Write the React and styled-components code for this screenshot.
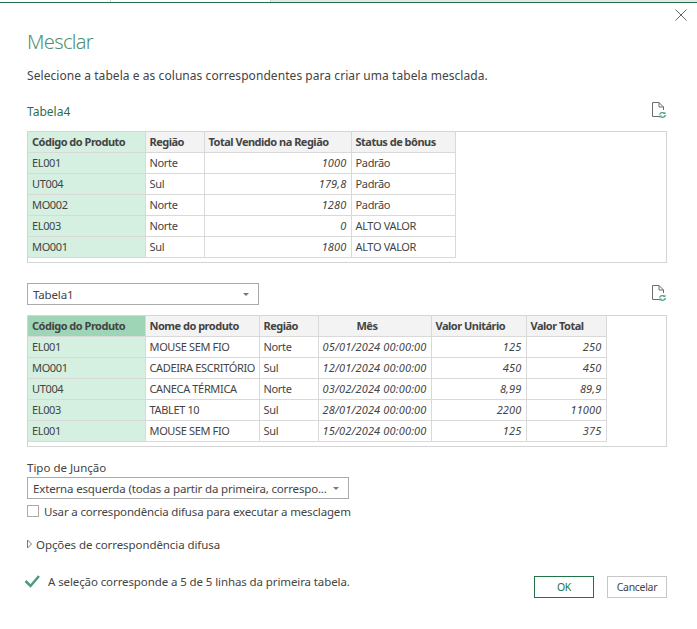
import React from "react";
import styled, { createGlobalStyle } from "styled-components";

const GlobalStyle = createGlobalStyle`
  html, body {
    margin: 0;
    padding: 0;
    background: #fff;
  }

  body {
    font-family: "Noto Sans", "Open Sans", sans-serif;
    font-size: 11.5px;
    color: #444;
  }
`;

const Page = styled.div`
  width: 697px;
  height: 629px;
  overflow: hidden;
  display: flex;
  flex-direction: column;
`;

const TopStrip = styled.div`
  height: 2px;
  border-bottom: 1px solid #217346;
  display: flex;
  flex: 0 0 auto;
`;

const StripCell = styled.div`
  width: ${props => props.width}px;
  border-right: 1px solid ${props => (props.divider ? "#d0d0d0" : "transparent")};
  background: ${props => props.shade || "transparent"};
`;

const Dialog = styled.div`
  flex: 1 1 auto;
  position: relative;
  padding: 26px 30px 0 27px;
`;

const CloseButton = styled.div`
  position: absolute;
  top: 5px;
  right: 9px;
  width: 14px;
  height: 14px;
  svg {
    display: block;
  }
`;

const Title = styled.h1`
  margin: 0;
  font-size: 20px;
  font-weight: 300;
  line-height: 26px;
  color: #4f8f6f;
  letter-spacing: -0.65px;
`;

const Intro = styled.p`
  margin: 12px 0 0;
  font-size: 12px;
  line-height: 17px;
  letter-spacing: 0.06px;
  color: #444;
`;

const SectionHead = styled.div`
  display: flex;
  justify-content: space-between;
  align-items: center;
  height: 22px;
  margin-top: ${props => props.gap}px;
`;

const TableName = styled.div`
  font-size: 12px;
  color: #2a6f55;
`;

const RefreshIcon = styled.div`
  width: 16px;
  height: 20px;
  svg {
    display: block;
  }
`;

const TableBox = styled.div`
  margin-top: ${props => props.gap}px;
  border: 1px solid #d4d4d4;
  height: 132px;
  box-sizing: border-box;
  width: 640px;
`;

const Grid = styled.table`
  border-collapse: collapse;
  table-layout: fixed;
  width: ${props => props.width}px;
`;

const HeadCell = styled.th`
  height: 20px;
  box-sizing: border-box;
  padding: 0 4px 0 ${props => props.indent || 4}px;
  font-size: 11px;
  font-weight: 700;
  line-height: 19px;
  letter-spacing: -0.5px;
  text-align: left;
  color: #444;
  white-space: nowrap;
  overflow: hidden;
  background: ${props => props.selected || "#f3f3f3"};
  border: 1px solid #d9d9d9;
  border-top: none;
  &:first-child {
    border-left: none;
  }
`;

const Cell = styled.td`
  height: 21px;
  box-sizing: border-box;
  padding: 0 4px;
  font-size: 11px;
  line-height: 20px;
  letter-spacing: ${props => (props.num ? "0.15px" : "-0.35px")};
  color: #444;
  white-space: nowrap;
  overflow: hidden;
  text-align: ${props => (props.num ? "right" : "left")};
  font-style: ${props => (props.num ? "italic" : "normal")};
  background: ${props => (props.selected ? "#d5efe1" : "#fff")};
  border: 1px solid #d9d9d9;
  &:first-child {
    border-left: none;
  }
`;

const SelectBox = styled.div`
  box-sizing: border-box;
  width: ${props => props.width}px;
  height: 22px;
  border: 1px solid #ababab;
  display: flex;
  align-items: center;
  justify-content: space-between;
  padding: 0 9px 0 5px;
  font-size: 11.5px;
  letter-spacing: -0.16px;
  color: #444;
  white-space: nowrap;
`;

const Caret = styled.span`
  width: 0;
  height: 0;
  border-left: 3px solid transparent;
  border-right: 3px solid transparent;
  border-top: 3px solid #777;
`;

const JoinLabel = styled.div`
  margin-top: 13px;
  line-height: 16px;
  font-size: 11.5px;
`;

const JoinSelect = styled.div`
  margin-top: 1px;
`;

const FuzzyRow = styled.label`
  display: flex;
  align-items: center;
  gap: 5px;
  margin-top: 5px;
  height: 14px;
  font-size: 11.5px;
  letter-spacing: -0.16px;
  white-space: nowrap;
`;

const CheckBox = styled.span`
  box-sizing: border-box;
  width: 12px;
  height: 12px;
  border: 1px solid #ababab;
`;

const OptionsRow = styled.div`
  display: flex;
  align-items: center;
  gap: 3px;
  margin-top: 18px;
  height: 16px;
  font-size: 11.5px;
  letter-spacing: -0.08px;
`;

const Footer = styled.div`
  display: flex;
  align-items: flex-start;
  justify-content: space-between;
  margin-top: 21px;
`;

const Status = styled.div`
  display: flex;
  align-items: center;
  gap: 8px;
  height: 16px;
  margin-left: -3px;
  font-size: 11.5px;
  letter-spacing: -0.1px;
`;

const Buttons = styled.div`
  display: flex;
  gap: 13px;
  margin-top: 3px;
`;

const Button = styled.button`
  box-sizing: border-box;
  width: 60px;
  height: 22px;
  padding: 0;
  background: #fff;
  font-family: inherit;
  font-size: 10.5px;
  letter-spacing: -0.3px;
  color: ${props => (props.primary ? "#217346" : "#444")};
  border: 1px solid ${props => (props.primary ? "#217346" : "#c6c6c6")};
`;

const refresh = (
  <svg width="16" height="20" viewBox="0 0 16 20" fill="none">
    <path d="M9 15.5H1.5V1.5H8L12.5 6V9" stroke="#6d6d6d" />
    <path d="M8 1.5V6H12.5" stroke="#6d6d6d" />
    <path d="M8.5 13.5A3 3 0 0 1 13.5 12.5" stroke="#4ea67f" strokeWidth="1.3" />
    <path d="M14.5 14A3 3 0 0 1 9.5 15.5" stroke="#4ea67f" strokeWidth="1.3" />
    <path d="M12 13h2.5v-2.5z" fill="#4ea67f" />
    <path d="M11 14.5H8.5V17z" fill="#4ea67f" />
  </svg>
);

const firstTable = {
  width: 427,
  columns: [
    { title: "Código do Produto", width: 117, key: true },
    { title: "Região", width: 59 },
    { title: "Total Vendido na Região", width: 147, num: true },
    { title: "Status de bônus", width: 104 }
  ],
  rows: [
    ["EL001", "Norte", "1000", "Padrão"],
    ["UT004", "Sul", "179,8", "Padrão"],
    ["MO002", "Norte", "1280", "Padrão"],
    ["EL003", "Norte", "0", "ALTO VALOR"],
    ["MO001", "Sul", "1800", "ALTO VALOR"]
  ]
};

const secondTable = {
  width: 578,
  selected: "#9fd5b7",
  columns: [
    { title: "Código do Produto", width: 117, key: true },
    { title: "Nome do produto", width: 114 },
    { title: "Região", width: 59 },
    { title: "Mês", width: 113, num: true, indent: 38 },
    { title: "Valor Unitário", width: 95, num: true },
    { title: "Valor Total", width: 80, num: true }
  ],
  rows: [
    ["EL001", "MOUSE SEM FIO", "Norte", "05/01/2024 00:00:00", "125", "250"],
    ["MO001", "CADEIRA ESCRITÓRIO", "Sul", "12/01/2024 00:00:00", "450", "450"],
    ["UT004", "CANECA TÉRMICA", "Norte", "03/02/2024 00:00:00", "8,99", "89,9"],
    ["EL003", "TABLET 10", "Sul", "28/01/2024 00:00:00", "2200", "11000"],
    ["EL001", "MOUSE SEM FIO", "Sul", "15/02/2024 00:00:00", "125", "375"]
  ]
};

function DataTable({ table, gap }) {
  return (
    <TableBox gap={gap}>
      <Grid width={table.width}>
        <colgroup>
          {table.columns.map(c => (
            <col key={c.title} width={c.width} />
          ))}
        </colgroup>
        <thead>
          <tr>
            {table.columns.map(c => (
              <HeadCell
                key={c.title}
                indent={c.indent}
                selected={c.key ? table.selected || "#d5efe1" : null}
              >
                {c.title}
              </HeadCell>
            ))}
          </tr>
        </thead>
        <tbody>
          {table.rows.map((row, r) => (
            <tr key={r}>
              {row.map((value, i) => (
                <Cell key={i} num={table.columns[i].num} selected={table.columns[i].key}>
                  {value}
                </Cell>
              ))}
            </tr>
          ))}
        </tbody>
      </Grid>
    </TableBox>
  );
}

export default function App() {
  return (
    <Page>
      <GlobalStyle />
      <TopStrip>
        <StripCell width={110} divider />
        <StripCell width={160} divider />
        <StripCell width={427} shade="#e6e6e6" />
      </TopStrip>
      <Dialog>
        <CloseButton>
          <svg width="14" height="14" viewBox="0 0 14 14" fill="none">
            <path d="M1.5 1.5L12.5 12.5M12.5 1.5L1.5 12.5" stroke="#666" />
          </svg>
        </CloseButton>
        <Title>Mesclar</Title>
        <Intro>Selecione a tabela e as colunas correspondentes para criar uma tabela mesclada.</Intro>
        <SectionHead gap={16}>
          <TableName>Tabela4</TableName>
          <RefreshIcon>{refresh}</RefreshIcon>
        </SectionHead>
        <DataTable table={firstTable} gap={9} />
        <SectionHead gap={20}>
          <SelectBox width={232}>
            Tabela1
            <Caret />
          </SelectBox>
          <RefreshIcon>{refresh}</RefreshIcon>
        </SectionHead>
        <DataTable table={secondTable} gap={10} />
        <JoinLabel>Tipo de Junção</JoinLabel>
        <JoinSelect>
          <SelectBox width={322}>
            Externa esquerda (todas a partir da primeira, correspo...
            <Caret />
          </SelectBox>
        </JoinSelect>
        <FuzzyRow>
          <CheckBox />
          Usar a correspondência difusa para executar a mesclagem
        </FuzzyRow>
        <OptionsRow>
          <svg width="6" height="10" viewBox="0 0 6 10" fill="none">
            <path d="M0.5 1L4.5 5L0.5 9Z" stroke="#777" />
          </svg>
          Opções de correspondência difusa
        </OptionsRow>
        <Footer>
          <Status>
            <svg width="16" height="14" viewBox="0 0 16 14" fill="none">
              <path d="M1.5 7L6.5 12L15 2" stroke="#4e9a7c" strokeWidth="2.5" />
            </svg>
            A seleção corresponde a 5 de 5 linhas da primeira tabela.
          </Status>
          <Buttons>
            <Button primary>OK</Button>
            <Button>Cancelar</Button>
          </Buttons>
        </Footer>
      </Dialog>
    </Page>
  );
}
